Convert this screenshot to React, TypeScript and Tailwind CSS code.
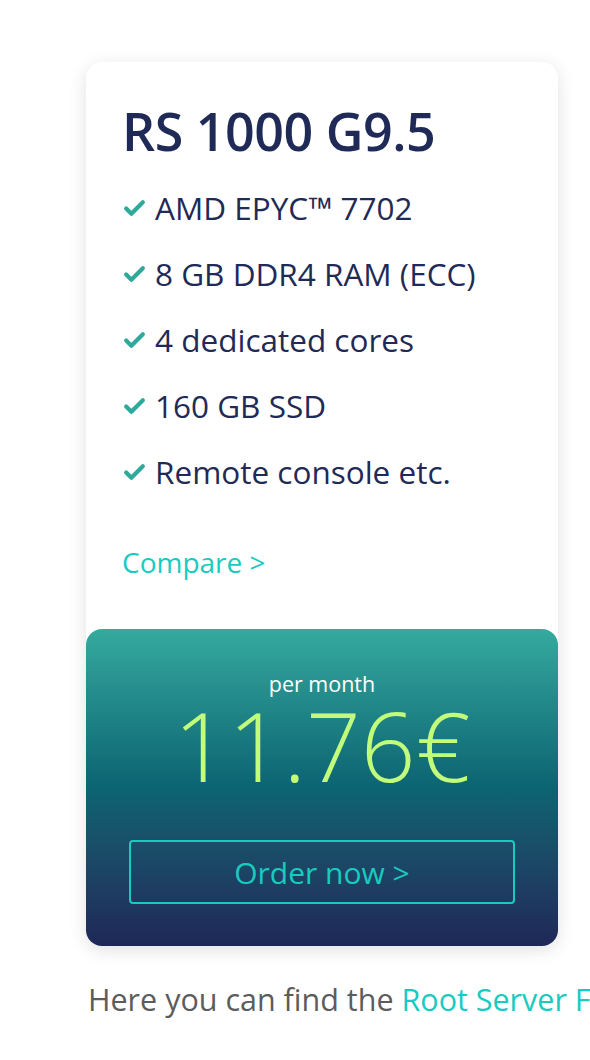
import { Check } from "lucide-react";

const features = [
  "AMD EPYC™ 7702",
  "8 GB DDR4 RAM (ECC)",
  "4 dedicated cores",
  "160 GB SSD",
  "Remote console etc.",
];

const font = { fontFamily: '"Open Sans", "Noto Sans", sans-serif' };

export default function App() {
  return (
    <div className="min-h-[1060px] w-[590px] overflow-hidden bg-white" style={font}>
      <div className="pl-[86px] pr-[32px] pt-[62px]">
        <div className="w-[472px] rounded-2xl bg-white shadow-[0_4px_18px_rgba(0,0,0,0.12)]">
          <div className="px-[36px] pt-[38px] pb-[46px]">
            <h2 className="text-[52px] font-semibold leading-[62px] tracking-[-0.5px] text-[#1f2a56]">
              RS 1000 G9.5
            </h2>
            <ul className="mt-[13px] flex flex-col">
              {features.map((f) => (
                <li key={f} className="flex h-[66px] items-center gap-[8px] text-[31.5px] text-[#1f2a56]">
                  <Check className="h-[25px] w-[25px] shrink-0 text-[#2fa99b]" strokeWidth={4} />
                  <span>{f}</span>
                </li>
              ))}
            </ul>
            <a className="mt-[36px] block text-[28px] leading-[42px] text-[#19cbbf]">Compare &gt;</a>
          </div>
          <div className="rounded-2xl bg-gradient-to-b from-[#35aa9e] via-[#0b6472] to-[#1e2857] px-[43px] pt-[40px] pb-[42px] text-center">
            <div className="text-[21.5px] leading-[30px] text-white">per month</div>
            <div className="text-[96px] font-light leading-[92px] text-[#c2fc7b]">11.76€</div>
            <button className="mt-[49px] h-[64px] w-full rounded-[4px] border-2 border-[#19cbbf] text-[30px] text-[#19cbbf]">
              Order now &gt;
            </button>
          </div>
        </div>
      </div>
      <p className="mt-[31px] whitespace-nowrap pl-[88px] text-[30.5px] leading-[45px] text-[#5c5c5c]">
        Here you can find the <a className="text-[#19cbbf]">Root Server Feature Comparison</a>
      </p>
    </div>
  );
}
